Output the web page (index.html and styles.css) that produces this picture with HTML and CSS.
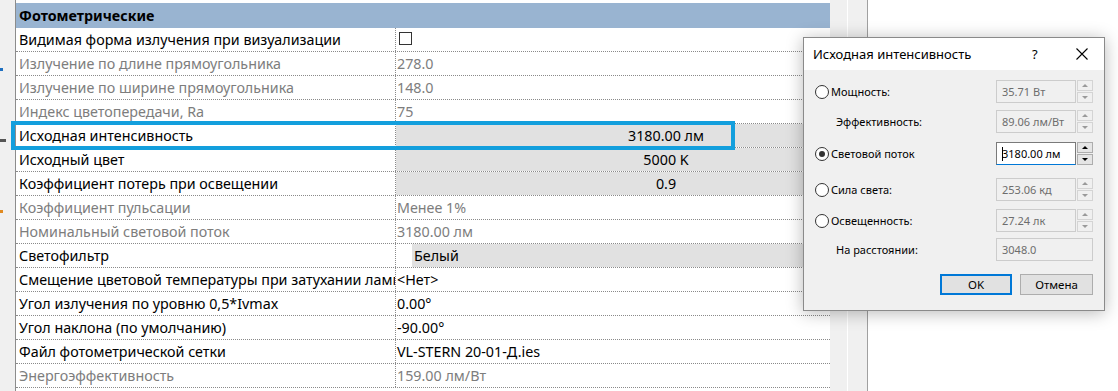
FILE: index.html
```html
<!DOCTYPE html>
<html lang="ru">
<head>
  <meta charset="UTF-8" />
  <title>Исходная интенсивность</title>
  <link rel="stylesheet" href="styles.css">
</head>
<body>
  <div class="screen">
    <div class="side">
      <span class="mark blue"></span>
      <span class="mark dark"></span>
      <span class="mark orange"></span>
    </div>

    <div class="props">
      <div class="group">Фотометрические</div>
      <div class="row"><div class="name">Видимая форма излучения при визуализации</div><div class="val"><span class="check"></span></div></div>
      <div class="row off"><div class="name">Излучение по длине прямоугольника</div><div class="val">278.0</div></div>
      <div class="row off"><div class="name">Излучение по ширине прямоугольника</div><div class="val">148.0</div></div>
      <div class="row off"><div class="name">Индекс цветопередачи, Ra</div><div class="val">75</div></div>
      <div class="row"><div class="name">Исходная интенсивность</div><div class="val btn">3180.00 лм</div></div>
      <div class="row"><div class="name">Исходный цвет</div><div class="val btn">5000 K</div></div>
      <div class="row"><div class="name">Коэффициент потерь при освещении</div><div class="val btn">0.9</div></div>
      <div class="row off"><div class="name">Коэффициент пульсации</div><div class="val">Менее 1%</div></div>
      <div class="row off"><div class="name">Номинальный световой поток</div><div class="val">3180.00 лм</div></div>
      <div class="row"><div class="name">Светофильтр</div><div class="val swatch"><span class="chip"></span><span class="chip-text">Белый</span></div></div>
      <div class="row"><div class="name">Смещение цветовой температуры при затухании ламп</div><div class="val">&lt;Нет&gt;</div></div>
      <div class="row"><div class="name">Угол излучения по уровню 0,5*Ivmax</div><div class="val">0.00°</div></div>
      <div class="row"><div class="name">Угол наклона (по умолчанию)</div><div class="val">-90.00°</div></div>
      <div class="row"><div class="name">Файл фотометрической сетки</div><div class="val">VL-STERN 20-01-Д.ies</div></div>
      <div class="row off"><div class="name">Энергоэффективность</div><div class="val">159.00 лм/Вт</div></div>

      <div class="focus"></div>
    </div>

    <div class="gutter">
      <div class="g1"></div>
      <div class="g2"></div>
    </div>

    <div class="dialog">
      <div class="title">
        <span class="title-text">Исходная интенсивность</span>
        <span class="help">?</span>
        <svg class="close" width="12" height="12" viewBox="0 0 12 12">
          <path d="M0.5 0.5 L11.5 11.5 M11.5 0.5 L0.5 11.5" stroke="#000" stroke-width="1.1" fill="none"/>
        </svg>
      </div>
      <div class="dbody">
        <div class="drow r1">
          <label class="opt"><span class="radio"></span>Мощность:</label>
          <div class="field">35.71 Вт</div>
          <div class="spin"><span class="up"></span><span class="down"></span></div>
        </div>
        <div class="drow r2">
          <label class="sub">Эффективность:</label>
          <div class="field">89.06 лм/Вт</div>
          <div class="spin"><span class="up"></span><span class="down"></span></div>
        </div>
        <div class="drow r3">
          <label class="opt"><span class="radio on"></span>Световой поток</label>
          <div class="field active"><span class="caret"></span>3180.00 лм</div>
          <div class="spin active"><span class="up"></span><span class="down"></span></div>
        </div>
        <div class="drow r4">
          <label class="opt"><span class="radio"></span>Сила света:</label>
          <div class="field">253.06 кд</div>
          <div class="spin"><span class="up"></span><span class="down"></span></div>
        </div>
        <div class="drow r5">
          <label class="opt"><span class="radio"></span>Освещенность:</label>
          <div class="field">27.24 лк</div>
          <div class="spin"><span class="up"></span><span class="down"></span></div>
        </div>
        <div class="drow r6">
          <label class="sub">На расстоянии:</label>
          <div class="field wide">3048.0</div>
        </div>
        <div class="buttons">
          <button class="ok">OK</button>
          <button>Отмена</button>
        </div>
      </div>
    </div>
  </div>
</body>
</html>
```

FILE: styles.css
```css
body {
  margin: 0;
  background: #ffffff;
  font-family: "Noto Sans", "Open Sans", sans-serif;
  color: #000;
}
.screen {
  display: flex;
  height: 391px;
  position: relative;
  overflow: hidden;
}
.side {
  width: 15px;
  background: #f0f0f0;
  border-right: 1px solid #8c8c8c;
  display: flex;
  flex-direction: column;
}
.mark {
  display: block;
  height: 3px;
}
.mark.blue {
  width: 3px;
  background: #1e6fc0;
  margin-top: 68px;
}
.mark.dark {
  width: 6px;
  background: #555;
  margin-top: 68px;
}
.mark.orange {
  width: 3px;
  background: #e08a20;
  margin-top: 68px;
}
.props {
  width: 814px;
  padding-top: 3px;
  position: relative;
  font-size: 14.3px;
}
.group {
  height: 25px;
  background: #99b4d1;
  font-weight: bold;
  line-height: 25px;
  padding-left: 3px;
}
.row {
  display: grid;
  grid-template-columns: 380px 1fr;
  height: 24px;
  box-sizing: border-box;
  border-bottom: 1px dotted #8a8a8a;
  line-height: 23px;
  white-space: nowrap;
}
.name {
  padding-left: 3px;
  border-right: 1px dotted #8a8a8a;
  overflow: hidden;
}
.val {
  padding-left: 1px;
  overflow: hidden;
}
.row.off {
  color: #7d7d7d;
}
.val.btn {
  background: #e1e1e1;
  text-align: center;
  padding-left: 106px;
}
.val.swatch {
  display: flex;
  padding-left: 0;
  background: #e1e1e1;
}
.chip {
  width: 16px;
  background: #fff;
}
.chip-text {
  padding-left: 2px;
}
.check {
  display: inline-block;
  width: 11px;
  height: 11px;
  border: 1px solid #333;
  margin: 4px 0 0 2px;
  vertical-align: top;
}
.focus {
  position: absolute;
  left: -5px;
  top: 121px;
  width: 724px;
  height: 29px;
  box-sizing: border-box;
  border: 4px solid #139fdd;
}
.gutter {
  display: flex;
}
.g1 {
  width: 17px;
  background: #f0f0f0;
  border-right: 1px solid #fff;
}
.g2 {
  width: 19px;
  background: #f0f0f0;
  border-right: 1px solid #a0a0a0;
}

/* dialog */
.dialog {
  position: absolute;
  left: 803px;
  top: 37px;
  width: 302px;
  height: 274px;
  box-sizing: border-box;
  border: 1px solid #8a8a8a;
  background: #f0f0f0;
  box-shadow: 0 2px 16px rgba(0, 0, 0, 0.28);
  font-size: 11px;
}
.title {
  height: 32px;
  background: #fff;
  display: flex;
  align-items: center;
  padding-left: 9px;
  font-size: 13px;
}
.title-text {
  flex: 1;
}
.help {
  width: 10px;
  margin-right: 34px;
}
.close {
  margin-right: 16px;
}
.dbody {
  padding: 10px 11px 0 11px;
}
.drow {
  display: flex;
  align-items: center;
  height: 23px;
}
.r2 { margin-top: 7px; }
.r3 { margin-top: 9px; }
.r4 { margin-top: 13px; }
.r5 { margin-top: 8px; }
.r6 { margin-top: 6px; }
.opt, .sub {
  flex: 1;
  display: flex;
  align-items: center;
}
.sub {
  padding-left: 21px;
}
.radio {
  width: 12px;
  height: 12px;
  border: 1px solid #333;
  border-radius: 50%;
  background: #fff;
  margin-right: 2px;
  position: relative;
}
.radio.on::after {
  content: "";
  position: absolute;
  left: 3px;
  top: 3px;
  width: 6px;
  height: 6px;
  border-radius: 50%;
  background: #333;
}
.field {
  width: 80px;
  height: 23px;
  box-sizing: border-box;
  border: 1px solid #cccccc;
  color: #6d6d6d;
  padding-left: 5px;
  line-height: 21px;
}
.field.wide {
  width: 97px;
}
.field.active {
  background: #fff;
  color: #000;
  border-color: #7a7a7a;
  border-bottom-color: #0078d7;
}
.caret {
  display: inline-block;
  width: 1px;
  height: 14px;
  background: #000;
  margin-right: -1px;
  vertical-align: -3px;
}
.spin {
  width: 16px;
  height: 23px;
  margin-left: 1px;
  display: flex;
  flex-direction: column;
  justify-content: space-between;
}
.spin span {
  height: 11px;
  box-sizing: border-box;
  border: 1px solid #d4d4d4;
  display: flex;
  align-items: center;
  justify-content: center;
}
.spin span::after {
  content: "";
  border-left: 3px solid transparent;
  border-right: 3px solid transparent;
}
.spin .up::after {
  border-bottom: 3px solid #9a9a9a;
}
.spin .down::after {
  border-top: 3px solid #9a9a9a;
}
.spin.active span {
  background: #e5e5e5;
  border-color: #adadad;
}
.spin.active .up::after {
  border-bottom-color: #000;
}
.spin.active .down::after {
  border-top-color: #000;
}
.buttons {
  display: flex;
  justify-content: flex-end;
  gap: 8px;
  margin-top: 13px;
}
button {
  width: 73px;
  height: 21px;
  box-sizing: border-box;
  background: #e1e1e1;
  border: 1px solid #adadad;
  font-family: inherit;
  font-size: 11.5px;
  padding: 0;
}
button.ok {
  width: 72px;
  border: 2px solid #0078d7;
}
```
